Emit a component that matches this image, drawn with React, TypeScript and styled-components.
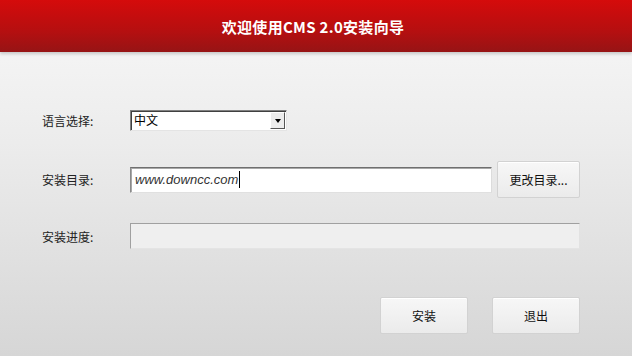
import styled, { createGlobalStyle } from 'styled-components';

const GlobalStyle = createGlobalStyle`
  html, body {
    margin: 0;
    padding: 0;
  }
  body {
    width: 632px;
    height: 356px;
    overflow: hidden;
    font-family: "Noto Sans CJK SC", "Liberation Sans", sans-serif;
  }
`;

const Window = styled.div`
  width: 632px;
  height: 356px;
  display: flex;
  flex-direction: column;
  background: linear-gradient(#f8f8f8, #ececec 40%, #d6d6d6);
`;

const Header = styled.div`
  height: 52px;
  display: flex;
  align-items: center;
  justify-content: center;
  background: linear-gradient(#d50b0b, #b50f10 60%, #961415);
  box-shadow: 0 2px 3px rgba(0, 0, 0, 0.18);
  color: #fff;
  font-size: 15px;
  font-weight: bold;
  letter-spacing: 0.3px;
  padding-right: 6px;
`;

const Form = styled.div`
  display: flex;
  flex-direction: column;
  padding: 0 52px 0 42px;
`;

const Row = styled.div<{ $top: number; $height: number }>`
  display: flex;
  align-items: center;
  margin-top: ${(p) => p.$top}px;
  height: ${(p) => p.$height}px;
`;

const Label = styled.div`
  width: 88px;
  font-size: 12px;
  color: #222;
`;

const Select = styled.div`
  width: 157px;
  height: 21px;
  box-sizing: border-box;
  display: flex;
  background: #fff;
  border: 1px solid;
  border-color: #808080 #e4e4e4 #e4e4e4 #808080;
  box-shadow: inset 1px 1px 0 #404040;
`;

const SelectValue = styled.div`
  flex: 1;
  padding-left: 3px;
  font-size: 12px;
  line-height: 18px;
  color: #000;
`;

const Arrow = styled.div`
  width: 15px;
  margin: 1px 1px 1px 0;
  display: flex;
  align-items: center;
  justify-content: center;
  background: #ececec;
  border: 1px solid;
  border-color: #fff #555 #555 #fff;
  box-sizing: border-box;

  &::after {
    content: '';
    border-left: 3.5px solid transparent;
    border-right: 3.5px solid transparent;
    border-top: 4px solid #000;
  }
`;

const TextBox = styled.div`
  width: 362px;
  height: 26px;
  box-sizing: border-box;
  background: #fff;
  border: 1px solid;
  border-color: #6f6f6f #dcdcdc #e0e0e0 #8a8a8a;
  box-shadow: inset 1px 1px 0 #a8a8a8;
  padding-left: 4px;
  display: flex;
  align-items: center;
  font-family: "Liberation Sans", Arial, sans-serif;
  font-style: italic;
  font-size: 13px;
  color: #333;
`;

const Caret = styled.span`
  display: inline-block;
  width: 1px;
  height: 17px;
  background: #000;
  margin-left: 1px;
`;

const Button = styled.div<{ $width: number }>`
  width: ${(p) => p.$width}px;
  height: 37px;
  box-sizing: border-box;
  display: flex;
  align-items: center;
  justify-content: center;
  border: 1px solid #d2d2d2;
  border-radius: 2px;
  background: linear-gradient(#f7f7f7, #ebebeb);
  box-shadow: inset 0 1px 0 #fff;
  font-size: 12px;
  color: #111;
`;

const Progress = styled.div`
  flex: 1;
  height: 26px;
  box-sizing: border-box;
  background: #efefef;
  border: 1px solid;
  border-color: #a0a0a0 #e2e2e2 #e4e4e4 #a0a0a0;
`;

const Gap = styled.div<{ $w: number }>`
  width: ${(p) => p.$w}px;
`;

const Actions = styled.div`
  display: flex;
  justify-content: flex-end;
  gap: 24px;
  margin-top: 48px;
`;

export default function App() {
  return (
    <>
      <GlobalStyle />
      <Window>
        <Header>欢迎使用CMS 2.0安装向导</Header>
        <Form>
          <Row $top={58} $height={21}>
            <Label>语言选择:</Label>
            <Select>
              <SelectValue>中文</SelectValue>
              <Arrow />
            </Select>
          </Row>
          <Row $top={30} $height={37}>
            <Label>安装目录:</Label>
            <TextBox>
              www.downcc.com
              <Caret />
            </TextBox>
            <Gap $w={5} />
            <Button $width={83}>更改目录...</Button>
          </Row>
          <Row $top={25} $height={26}>
            <Label>安装进度:</Label>
            <Progress />
          </Row>
          <Actions>
            <Button $width={88}>安装</Button>
            <Button $width={88}>退出</Button>
          </Actions>
        </Form>
      </Window>
    </>
  );
}
